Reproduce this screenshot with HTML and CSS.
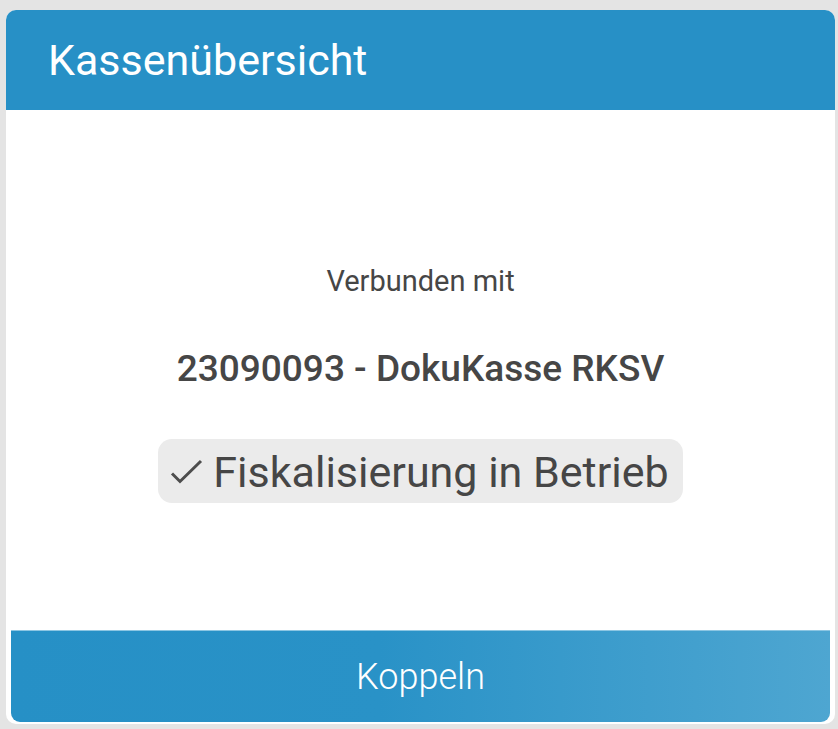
FILE: index.html
```html
<!DOCTYPE html>
<html lang="de">

<head>
    <meta charset="UTF-8">
    <title>Kassenübersicht</title>
    <link rel="stylesheet" href="styles.css">
</head>

<body>
    <div class="karte">
        <header class="kopf">
            <h1>Kassenübersicht</h1>
        </header>
        <div class="inhalt">
            <p class="label">Verbunden mit</p>
            <p class="kasse">23090093 - DokuKasse RKSV</p>
            <div class="status">
                <svg class="haken" width="34" height="26" viewBox="0 0 34 26">
                    <path d="M2 14.5 L10 22.5 L31 2" fill="none" stroke="#4d4d4d" stroke-width="3" />
                </svg>
                <span>Fiskalisierung in Betrieb</span>
            </div>
        </div>
        <button class="koppeln" type="button">Koppeln</button>
    </div>
</body>

</html>
```

FILE: styles.css
```css
html,
body {
    height: 100%;
}

body {
    margin: 0;
    background-color: #e4e4e4;
    font-family: Roboto, "Noto Sans", sans-serif;
    color: #464646;
    padding: 10px 3px 5px 6px;
    box-sizing: border-box;
}

.karte {
    height: 100%;
    background: white;
    border-radius: 10px;
    display: flex;
    flex-direction: column;
    overflow: hidden;
}

.kopf {
    background-color: #2790c6;
    color: white;
    height: 100px;
    padding: 0 42px;
    display: flex;
    align-items: center;
    flex-shrink: 0;
}

.kopf h1 {
    margin: 0;
    font-size: 43px;
    line-height: 1;
    font-weight: 400;
}

.inhalt {
    flex-grow: 1;
    display: flex;
    flex-direction: column;
    align-items: center;
    padding-top: 157px;
    box-sizing: border-box;
}

.label {
    margin: 0;
    font-size: 29px;
    line-height: 1;
}

.kasse {
    margin: 54px 0 0;
    font-size: 37px;
    line-height: 1;
    font-weight: 500;
}

.status {
    margin-top: 52px;
    background-color: #ebebeb;
    border-radius: 14px;
    height: 64px;
    padding: 2px 14px 0 12px;
    box-sizing: border-box;
    display: flex;
    align-items: center;
    gap: 9px;
    font-size: 43px;
    line-height: 1;
}

.koppeln {
    margin: 0 5px 2px;
    height: 92px;
    border: none;
    border-top: 1px solid #8cc6e3;
    border-radius: 0 0 9px 9px;
    background: linear-gradient(to right, #2690c6 0%, #2992c7 45%, #4ea6d1 100%);
    color: white;
    font-family: Roboto, sans-serif;
    font-weight: 300;
    font-size: 36px;
    line-height: 1;
    flex-shrink: 0;
    cursor: pointer;
}
```
